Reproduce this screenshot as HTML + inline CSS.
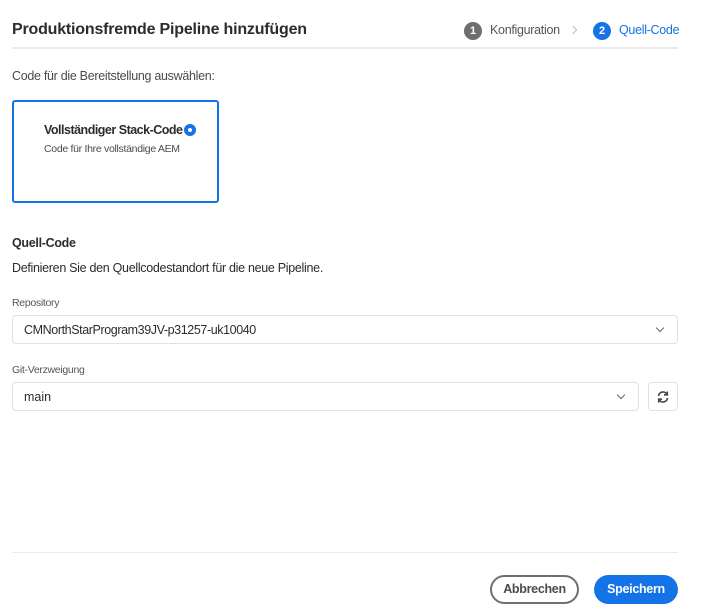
<!DOCTYPE html>
<html><head><meta charset="utf-8"><style>
*{box-sizing:border-box;margin:0;padding:0}
body{width:706px;height:614px;background:#fff;font-family:"Liberation Sans",sans-serif;color:#2c2c2c;position:relative;overflow:hidden}
.a{position:absolute;white-space:nowrap}
.field{position:absolute;border:1px solid #e1e1e1;border-radius:4px;background:#fff}
.chev{position:absolute;top:9px;width:6px;height:6px;border-right:1.4px solid #666;border-bottom:1.4px solid #666;transform:rotate(45deg)}
</style></head><body>
<div class="a" style="left:12px;top:21px;font-size:16px;font-weight:bold;color:#2c2c2c;letter-spacing:-0.2px">Produktionsfremde Pipeline hinzufügen</div>
<div class="a" style="left:464px;top:22px;width:18px;height:18px;border-radius:50%;background:#6e6e6e;color:#fff;font-size:11px;font-weight:bold;text-align:center;line-height:18px">1</div>
<div class="a" style="left:490px;top:23px;font-size:12.5px;color:#555;letter-spacing:-0.3px">Konfiguration</div>
<div class="a" style="left:570px;top:27px;width:6px;height:6px;border-right:1.3px solid #bbb;border-top:1.3px solid #bbb;transform:rotate(45deg)"></div>
<div class="a" style="left:593px;top:22px;width:18px;height:18px;border-radius:50%;background:#1473e6;color:#fff;font-size:11px;font-weight:bold;text-align:center;line-height:18px">2</div>
<div class="a" style="left:619px;top:23px;font-size:12.5px;color:#1473e6;letter-spacing:-0.3px">Quell-Code</div>
<div class="a" style="left:12px;top:47px;width:666px;height:2px;background:#eaeaea"></div>
<div class="a" style="left:12px;top:69px;font-size:12.5px;color:#4b4b4b;letter-spacing:-0.3px">Code für die Bereitstellung auswählen:</div>
<div class="a" style="left:12px;top:100px;width:207px;height:103px;border:2px solid #1473e6;border-radius:3px"></div>
<div class="a" style="left:44px;top:123px;font-size:12.5px;font-weight:bold;color:#2c2c2c;letter-spacing:-0.5px">Vollständiger Stack-Code</div>
<div class="a" style="left:184px;top:124px;width:12px;height:12px;border-radius:50%;background:#1473e6"><div style="margin:4px;width:4px;height:4px;border-radius:50%;background:#fff"></div></div>
<div class="a" style="left:44px;top:143px;font-size:10.5px;color:#4b4b4b;letter-spacing:-0.3px">Code für Ihre vollständige AEM</div>
<div class="a" style="left:12px;top:236px;font-size:12.5px;font-weight:bold;color:#2c2c2c;letter-spacing:-0.3px">Quell-Code</div>
<div class="a" style="left:12px;top:261px;font-size:12.5px;color:#2c2c2c;letter-spacing:-0.3px">Definieren Sie den Quellcodestandort für die neue Pipeline.</div>
<div class="a" style="left:12px;top:297px;font-size:10.5px;color:#555;letter-spacing:-0.3px">Repository</div>
<div class="field" style="left:12px;top:315px;width:666px;height:29px"><div class="a" style="left:11px;top:7px;font-size:12.5px;color:#2c2c2c;letter-spacing:-0.4px">CMNorthStarProgram39JV-p31257-uk10040</div><div class="chev" style="right:14px"></div></div>
<div class="a" style="left:12px;top:364px;font-size:10.5px;color:#555;letter-spacing:-0.3px">Git-Verzweigung</div>
<div class="field" style="left:12px;top:382px;width:627px;height:29px"><div class="a" style="left:11px;top:7px;font-size:12.5px;color:#2c2c2c">main</div><div class="chev" style="right:14px"></div></div>
<div class="field" style="left:648px;top:382px;width:30px;height:29px">
<svg style="position:absolute;left:7px;top:7px" width="14" height="14" viewBox="0 0 14 14" fill="none" stroke="#444" stroke-width="1.6"><path d="M2.5 6A4.5 4.5 0 0 1 11 4.5"/><path d="M11.5 8A4.5 4.5 0 0 1 3 9.5"/><path d="M11.3 1.5V4.8H8" /><path d="M2.7 12.5V9.2H6"/></svg></div>
<div class="a" style="left:12px;top:552px;width:666px;height:1px;background:#eaeaea"></div>
<div class="a" style="left:490px;top:575px;width:89px;height:29px;border:2px solid #707070;border-radius:15px;font-size:12.5px;font-weight:bold;color:#4b4b4b;text-align:center;line-height:25px;letter-spacing:-0.3px">Abbrechen</div>
<div class="a" style="left:594px;top:575px;width:84px;height:29px;background:#1473e6;border-radius:15px;font-size:12.5px;font-weight:bold;color:#fff;text-align:center;line-height:29px;letter-spacing:-0.3px">Speichern</div>
</body></html>
